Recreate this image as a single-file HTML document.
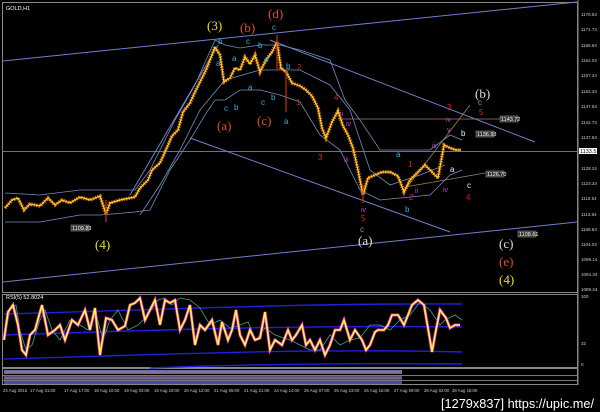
<!DOCTYPE html><html><head><style>
body{margin:0;background:#000;width:600px;height:412px;overflow:hidden;font-family:"Liberation Sans",sans-serif}
svg{position:absolute;left:0;top:0}
</style></head><body>
<svg width="600" height="412" viewBox="0 0 600 412">
<rect width="600" height="412" fill="#000"/>
<rect x="2.5" y="2.5" width="575" height="290" fill="none" stroke="#888" stroke-width="1"/>
<rect x="2.5" y="294.5" width="575" height="73" fill="none" stroke="#888"/>
<rect x="2.5" y="368.5" width="575" height="16" fill="none" stroke="#888"/>
<line x1="3" y1="375.5" x2="577" y2="375.5" stroke="#777"/>
<line x1="3" y1="380.5" x2="577" y2="380.5" stroke="#777"/>
<line x1="578" y1="0" x2="578" y2="385" stroke="#888"/>
<rect x="4" y="370" width="398" height="4" fill="#6a6a9a"/>
<rect x="4" y="376" width="398" height="4" fill="#7a5a8a" opacity=".8"/>
<rect x="4" y="381" width="398" height="3" fill="#4a4aaa"/>
<line x1="4" y1="372" x2="402" y2="372" stroke="#c88" stroke-width=".6"/>
<line x1="4" y1="378" x2="402" y2="378" stroke="#8cc" stroke-width=".6"/>
<line x1="3" y1="151.5" x2="577" y2="151.5" stroke="#999" stroke-width=".8"/>
<g stroke="#6f7fcf" stroke-width="1" fill="none">
<line x1="3" y1="61" x2="577" y2="2"/>
<line x1="3" y1="282" x2="577" y2="222"/>
<line x1="190" y1="138" x2="450" y2="232"/>
<line x1="270" y1="40" x2="535" y2="142"/>
<line x1="130" y1="195" x2="218" y2="45"/>
</g>
<g stroke="#6f8fbf" stroke-width=".8" fill="none">
<path d="M5,193 L40,195 L80,190 L100,190 L135,190 L150,170 L175,120 L195,85 L215,40 L225,45 L240,48 L260,45 L280,45 L300,50 L330,60 L345,100 L360,120 L380,150 L400,150 L430,150 L450,135 L462,140"/>
<path d="M5,222 L40,222 L80,215 L100,215 L135,212 L150,210 L170,170 L190,140 L205,115 L215,100 L225,100 L240,90 L260,90 L280,95 L300,102 L320,135 L340,150 L360,190 L380,200 L400,198 L430,195 L450,175 L462,170"/>
<path d="M140,215 L160,185 L180,150 L200,110 L225,80 L260,70 L300,70 L330,85 L350,110 L370,170 L390,185 L420,175 L445,165"/>
</g>
<line x1="338" y1="119" x2="500" y2="119" stroke="#a08050" stroke-width=".8"/>
<line x1="405" y1="187" x2="485" y2="173" stroke="#a08050" stroke-width=".8"/>
<line x1="405" y1="190" x2="470" y2="105" stroke="#a08050" stroke-width=".8"/>
<polyline fill="none" stroke="#d07018" stroke-width="3.5" stroke-dasharray="1.5 1" points="5,208 12,200 18,198 24,210 30,204 40,206 48,198 55,205 62,200 70,203 80,197 90,200 100,196 106,214 110,203 120,200 135,197 140,188 148,180 152,170 160,163 165,152 172,136 178,130 183,112 190,103 195,92 200,82 206,70 210,60 215,47 220,55 224,82 230,78 235,68 240,70 245,57 250,64 255,55 260,72 266,60 272,52 277,42 281,68 286,72 292,83 300,86 306,90 312,96 318,108 322,128 326,138 332,122 338,111 343,126 348,135 353,148 358,170 363,195 368,178 375,175 382,172 390,172 398,176 404,192 410,180 418,172 425,165 432,172 438,178 444,145 450,148 456,150 461,150"/>
<polyline fill="none" stroke="#ffd030" stroke-width="1.2" points="5,208 12,200 18,198 24,210 30,204 40,206 48,198 55,205 62,200 70,203 80,197 90,200 100,196 106,214 110,203 120,200 135,197 140,188 148,180 152,170 160,163 165,152 172,136 178,130 183,112 190,103 195,92 200,82 206,70 210,60 215,47 220,55 224,82 230,78 235,68 240,70 245,57 250,64 255,55 260,72 266,60 272,52 277,42 281,68 286,72 292,83 300,86 306,90 312,96 318,108 322,128 326,138 332,122 338,111 343,126 348,135 353,148 358,170 363,195 368,178 375,175 382,172 390,172 398,176 404,192 410,180 418,172 425,165 432,172 438,178 444,145 450,148 456,150 461,150"/>
<g stroke="#d03010" stroke-width="1.2"><line x1="106" y1="200" x2="106" y2="222"/><line x1="277" y1="35" x2="277" y2="70"/><line x1="286" y1="70" x2="286" y2="112"/><line x1="363" y1="185" x2="363" y2="203"/></g>
<g font-family="Liberation Serif,serif" font-size="13">
<text x="207" y="30" fill="#e8e020">(3)</text>
<text x="240" y="32" fill="#e05020">(b)</text>
<text x="268" y="18" fill="#e05020">(d)</text>
<text x="217" y="130" fill="#e05020">(a)</text>
<text x="257" y="125" fill="#e05020">(c)</text>
<text x="95" y="249" fill="#e8e020">(4)</text>
<text x="358" y="245" fill="#ddd">(a)</text>
<text x="475" y="98" fill="#ddd">(b)</text>
<text x="499" y="248" fill="#ddd">(c)</text>
<text x="499" y="266" fill="#e05020">(e)</text>
<text x="499" y="284" fill="#e8e020">(4)</text>
</g>
<g font-family="Liberation Sans,sans-serif" font-size="8" fill="#30b0e0">
<text x="218" y="44">b</text><text x="216" y="66">a</text><text x="232" y="61">a</text><text x="246" y="44">c</text><text x="258" y="48">b</text><text x="264" y="62">a</text><text x="272" y="30">c</text><text x="286" y="69">b</text><text x="248" y="90">a</text><text x="224" y="111">c</text><text x="234" y="110">b</text><text x="261" y="105">c</text><text x="271" y="100">b</text><text x="284" y="124">a</text><text x="396" y="157">a</text><text x="360" y="232">c</text><text x="405" y="212">b</text><text x="478" y="105">c</text>
</g>
<g font-family="Liberation Sans,sans-serif" font-size="8" fill="#e02020">
<text x="297" y="70">2</text><text x="296" y="105">1</text><text x="334" y="100">4</text><text x="318" y="160">3</text><text x="408" y="167">1</text><text x="409" y="200">2</text><text x="447" y="110">3</text><text x="479" y="115">5</text><text x="466" y="200">4</text><text x="361" y="221">5</text>
</g>
<g font-family="Liberation Sans,sans-serif" font-size="7" fill="#c040e0">
<text x="340" y="116">ii</text><text x="346" y="126">iv</text><text x="344" y="162">iii</text><text x="432" y="148">iii</text><text x="446" y="122">iv</text><text x="415" y="193">ii</text><text x="443" y="192">iv</text><text x="361" y="212">iv</text><text x="447" y="132">v</text>
</g>
<g font-family="Liberation Sans,sans-serif" font-size="8" fill="#eee"><text x="461" y="136">b</text><text x="450" y="172">a</text><text x="467" y="188">c</text></g>
<g font-family="Liberation Sans,sans-serif" font-size="5.5" fill="#fff">
<rect x="500" y="116" width="18" height="6" fill="#333" stroke="#aaa" stroke-width=".5"/><text x="501" y="121">1143.72</text>
<rect x="476" y="131" width="18" height="6" fill="#333" stroke="#aaa" stroke-width=".5"/><text x="477" y="136">1136.93</text>
<rect x="486" y="171" width="18" height="6" fill="#333" stroke="#aaa" stroke-width=".5"/><text x="487" y="176">1126.70</text>
<rect x="71" y="225" width="18" height="6" fill="#333" stroke="#aaa" stroke-width=".5"/><text x="72" y="230">1109.83</text>
<rect x="518" y="231" width="18" height="6" fill="#333" stroke="#aaa" stroke-width=".5"/><text x="519" y="236">1108.61</text>
<rect x="579" y="148" width="18" height="6" fill="#fff"/><text x="580" y="153" fill="#000">1133.51</text>
<text x="6" y="10">GOLD,H1</text>
<text x="6" y="299">RSI(5) 52.8024</text>
</g>
<g font-family="Liberation Sans,sans-serif" font-size="4.5" fill="#ccc">
<text x="581" y="16">1176.54</text><text x="581" y="31">1171.74</text><text x="581" y="47">1166.94</text><text x="581" y="62">1162.04</text><text x="581" y="77">1157.24</text><text x="581" y="93">1152.34</text><text x="581" y="108">1147.54</text><text x="581" y="124">1142.74</text><text x="581" y="139">1137.84</text><text x="581" y="170">1128.24</text><text x="581" y="185">1123.34</text><text x="581" y="200">1118.54</text><text x="581" y="216">1113.64</text><text x="581" y="231">1108.84</text><text x="581" y="246">1104.04</text><text x="581" y="261">1099.14</text><text x="581" y="276">1094.34</text><text x="581" y="291">1089.44</text>
<text x="581" y="298">100</text><text x="581" y="345">32</text><text x="581" y="366">0</text>
<g font-size="4.3"><text x="3" y="392">24 Aug 2015</text><text x="30" y="392">17 Aug 01:00</text><text x="64" y="392">17 Aug 17:00</text><text x="94" y="392">18 Aug 10:00</text><text x="124" y="392">19 Aug 03:00</text><text x="154" y="392">19 Aug 19:00</text><text x="184" y="392">20 Aug 12:00</text><text x="214" y="392">21 Aug 05:00</text><text x="244" y="392">21 Aug 21:00</text><text x="274" y="392">24 Aug 14:00</text><text x="304" y="392">25 Aug 07:00</text><text x="334" y="392">25 Aug 23:00</text><text x="364" y="392">26 Aug 16:00</text><text x="394" y="392">27 Aug 09:00</text><text x="424" y="392">28 Aug 02:00</text><text x="452" y="392">28 Aug 18:00</text></g>
</g>
<g stroke="#2020e0" stroke-width="1.4" fill="none">
<path d="M4,314 C150,310 300,303 462,304"/>
<path d="M4,335 C150,330 300,325 462,327"/>
<path d="M4,359 C150,355 300,348 462,352"/>
<path d="M150,368 C250,364 350,363 462,364"/>
</g>
<polyline fill="none" stroke="#40a090" stroke-width=".8" points="4,340 10,310 16,305 20,330 26,350 32,345 40,320 45,310 52,330 60,340 70,320 80,325 88,330 95,310 103,340 110,320 118,310 128,330 138,325 148,315 158,300 165,298 172,305 180,298 190,300 200,308 210,325 220,320 230,328 240,325 248,322 256,340 265,328 275,335 290,340 300,345 310,350 320,350 330,335 340,345 350,340 360,338 370,325 380,325 390,330 400,320 410,315 420,302 430,310 440,325 445,320 455,315 462,320"/>
<polyline fill="none" stroke="#e020e0" stroke-width="3" points="4,340 8,312 13,305 18,325 22,350 26,355 30,335 35,330 42,305 48,335 55,330 60,325 65,340 72,320 78,325 85,310 90,330 95,308 100,355 106,318 112,320 118,330 125,326 130,305 135,303 140,298 145,320 150,310 155,300 160,325 165,300 170,303 175,300 180,330 185,320 190,305 195,345 200,325 205,330 212,320 218,345 222,322 228,340 232,330 236,310 240,335 245,345 250,330 255,340 260,338 265,312 270,350 275,340 282,345 288,330 292,340 296,335 302,325 306,345 310,340 315,350 320,340 325,355 330,345 335,330 340,330 344,320 350,340 355,330 362,340 366,350 370,345 375,332 378,330 384,330 388,325 392,315 398,315 404,325 408,315 412,305 418,300 424,305 430,340 432,352 436,330 440,310 446,318 450,328 455,325 460,325"/>
<polyline fill="none" stroke="#ffff30" stroke-width="1.6" points="4,340 8,312 13,305 18,325 22,350 26,355 30,335 35,330 42,305 48,335 55,330 60,325 65,340 72,320 78,325 85,310 90,330 95,308 100,355 106,318 112,320 118,330 125,326 130,305 135,303 140,298 145,320 150,310 155,300 160,325 165,300 170,303 175,300 180,330 185,320 190,305 195,345 200,325 205,330 212,320 218,345 222,322 228,340 232,330 236,310 240,335 245,345 250,330 255,340 260,338 265,312 270,350 275,340 282,345 288,330 292,340 296,335 302,325 306,345 310,340 315,350 320,340 325,355 330,345 335,330 340,330 344,320 350,340 355,330 362,340 366,350 370,345 375,332 378,330 384,330 388,325 392,315 398,315 404,325 408,315 412,305 418,300 424,305 430,340 432,352 436,330 440,310 446,318 450,328 455,325 460,325"/>
<text x="441" y="408" font-family="Liberation Sans,sans-serif" font-size="13" fill="#fff" textLength="153" lengthAdjust="spacingAndGlyphs">[1279x837] https://upic.me/</text>
</svg>
</body></html>
